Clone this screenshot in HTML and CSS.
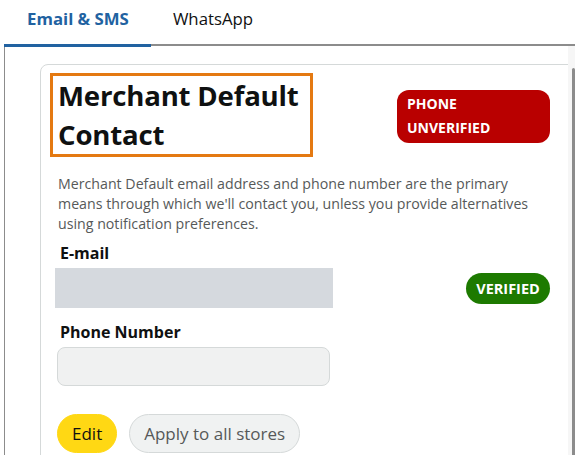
FILE: index.html
```html
<!DOCTYPE html>
<html lang="en">
<head>
<meta charset="utf-8">
<title>Merchant Default Contact</title>
<link rel="stylesheet" href="styles.css">
</head>
<body>
<div class="tabs">
  <div class="tab active">Email &amp; SMS</div>
  <div class="tab">WhatsApp</div>
</div>
<div class="panel">
  <div class="panel-inner">
    <div class="card">
      <div class="header">
        <div class="title-box"><h1 class="title">Merchant Default Contact</h1></div>
        <div class="badge badge-red">PHONE<br>UNVERIFIED</div>
      </div>
      <p class="desc">Merchant Default email address and phone number are the primary means through which we'll contact you, unless you provide alternatives using notification preferences.</p>
      <div class="label">E-mail</div>
      <div class="row">
        <div class="email-box"></div>
        <div class="badge badge-green">VERIFIED</div>
      </div>
      <div class="label label-phone">Phone Number</div>
      <div class="phone-box"></div>
      <div class="actions">
        <button class="btn btn-yellow">Edit</button>
        <button class="btn btn-grey">Apply to all stores</button>
      </div>
    </div>
  </div>
  <div class="scrollbar"><div class="thumb"></div></div>
</div>
</body>
</html>
```
FILE: styles.css
```css
* { box-sizing: border-box; }
html, body { margin: 0; padding: 0; background: #fff; }
body {
  font-family: "Open Sans", "Noto Sans", sans-serif;
  color: #0f1111;
  width: 575px;
  height: 455px;
  overflow: hidden;
}
.tabs {
  display: flex;
  margin-left: 4px;
  border-bottom: 2px solid #8c8c8c;
  height: 46px;
}
.tab {
  padding: 0 22px;
  height: 46px;
  line-height: 38px;
  font-size: 16.8px;
  color: #0f1111;
}
.tab.active {
  color: #2162a1;
  font-weight: 700;
  padding: 0 22px 0 23px;
  border-bottom: 3px solid #2162a1;
  margin-bottom: -2px;
  height: 47px;
}
.panel {
  display: flex;
  margin-left: 4px;
  border-left: 1px solid #8c8c8c;
  height: 409px;
}
.panel-inner {
  flex: 1;
  overflow: hidden;
  padding: 18px 0 0 35px;
}
.scrollbar {
  width: 7px;
  background: #f6f6f6;
  display: flex;
  justify-content: flex-end;
  padding-top: 22px;
}
.thumb {
  width: 3px;
  background: #8c8c8c;
  border-radius: 2px 2px 0 0;
}
.card {
  width: 560px;
  border: 1px solid #d5d9d9;
  border-radius: 8px;
  padding: 8px 0 0 9px;
  height: 420px;
}
.header {
  display: flex;
  align-items: flex-start;
}
.title-box {
  width: 263px;
  border: 3px solid #e47911;
  padding: 0 5px;
}
.title {
  margin: 0;
  font-size: 27.6px;
  letter-spacing: -0.2px;
  line-height: 39px;
  font-weight: 700;
}
.badge {
  color: #fff;
  font-weight: 700;
  font-size: 14px;
}
.badge-red {
  margin: 17px 0 0 84px;
  width: 153px;
  height: 53px;
  background: #b90000;
  border-radius: 12px;
  padding: 2px 10px;
  line-height: 24px;
}
.desc {
  margin: 17px 0 0 8px;
  width: 495px;
  font-size: 14.2px;
  line-height: 20px;
  color: #565959;
}
.label {
  margin: 8px 0 0 10px;
  font-size: 16px;
  font-weight: 700;
  line-height: 22px;
}
.row {
  display: flex;
  align-items: center;
  justify-content: space-between;
  width: 495px;
  margin: 4px 0 0 5px;
}
.email-box {
  width: 278px;
  height: 40px;
  background: #d5d9de;
}
.badge-green {
  width: 84px;
  height: 31px;
  line-height: 31px;
  text-align: center;
  background: #1d7a00;
  border-radius: 16px;
  font-size: 14.5px;
}
.label-phone { margin-top: 13px; }
.phone-box {
  margin: 4px 0 0 7px;
  width: 273px;
  height: 39px;
  background: #f0f1f1;
  border: 1px solid #d5d9d9;
  border-radius: 8px;
}
.actions {
  display: flex;
  gap: 12px;
  margin: 28px 0 0 7px;
}
.btn {
  font-family: inherit;
  font-size: 17px;
  height: 39px;
  border-radius: 20px;
  padding: 0 14px;
  cursor: pointer;
}
.btn-yellow {
  background: #ffd814;
  border: 1px solid #ffd814;
  color: #0f1111;
}
.btn-grey {
  background: #f0f2f2;
  border: 1px solid #d5d9d9;
  color: #565959;
}
```
